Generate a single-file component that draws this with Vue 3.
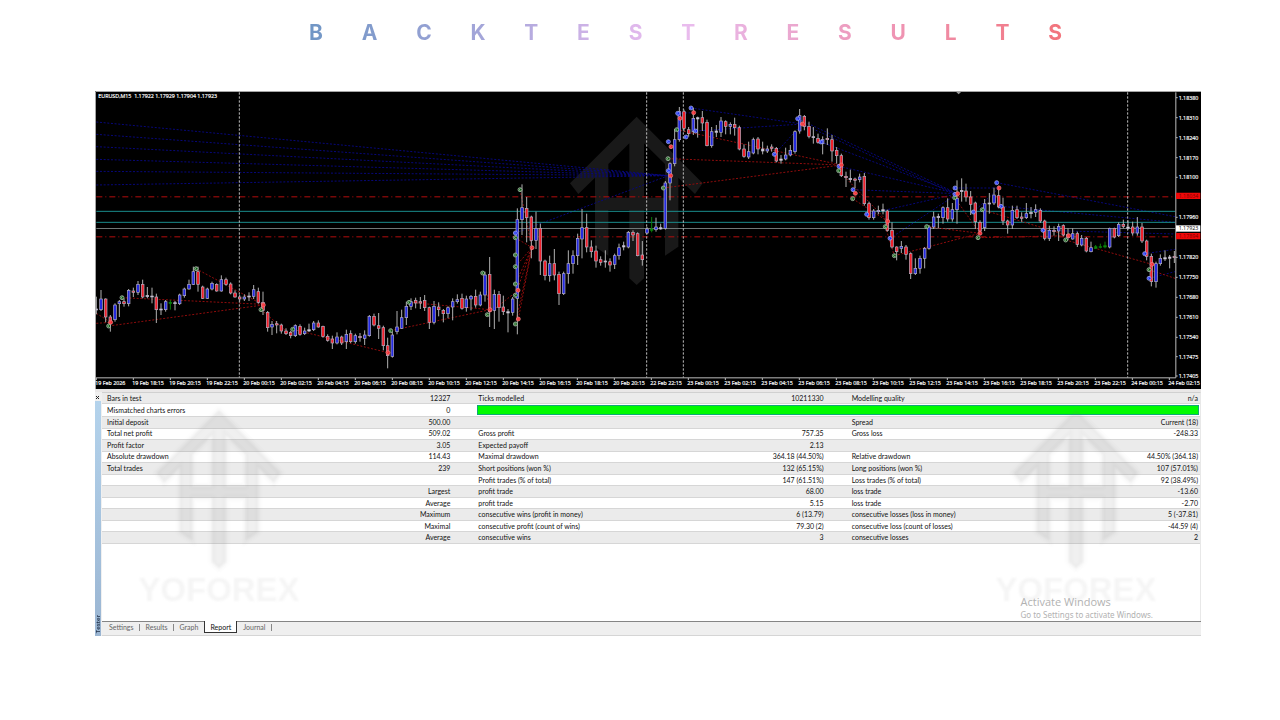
<script setup>
const title = [...'BACKTESTRESULTS']

// Candles in time order: [high, body top, body bottom, low, kind]
const raw = `635 672 675 688 w|615 642 674 678 b|640 642 696 712 r|690 696 716 740 r|655 660 704 710 b|645 650 656 696 b|640 650 656 665 r|612 616 656 664 b|608 618 622 636 r|588 598 622 630 b
584 598 636 640 r|606 631 635 640 w|608 633 636 655 w|626 636 674 714 r|655 672 675 690 w|645 650 674 680 b|645 652 655 674 g|648 653 656 676 w|626 630 656 660 b|608 612 632 638 b
584 598 612 614 b|545 560 598 600 b|545 560 598 620 r|602 606 640 642 r|608 612 640 642 b|590 595 612 616 b|595 598 618 620 r|571 584 618 620 b|578 584 598 602 r|592 597 624 628 r
616 624 636 638 r|630 636 642 650 r|628 636 642 648 b|622 633 636 648 w|600 614 634 642 b|608 620 652 656 r|620 652 676 690 r|678 682 728 740 r|708 718 726 750 b|708 716 720 745 r
716 720 738 746 r|730 738 746 750 r|738 742 752 760 r|718 722 752 756 b|718 724 748 752 r|728 738 746 750 b|716 734 738 741 w|708 714 734 738 b|706 714 726 728 r|722 724 754 758 r
748 754 766 770 r|752 762 774 792 r|742 756 774 778 b|752 756 774 780 r|734 748 770 792 b|736 746 770 774 r|746 752 770 776 b|744 754 758 770 r|736 750 760 780 b|690 694 752 755 b
686 694 720 724 r|684 722 730 762 r|722 728 782 796 r|758 782 812 850 r|740 750 814 818 b|678 726 740 748 b|674 698 730 732 b|650 664 698 720 b|640 650 664 675 b|638 646 654 670 r
636 650 654 672 r|630 646 668 678 r|665 668 712 732 r|648 664 712 718 b|652 666 674 694 r|672 676 686 712 r|664 668 686 700 b|640 650 666 706 b|628 644 650 656 b|626 640 670 674 r
632 642 668 680 b|630 634 642 676 b|614 634 660 668 r|620 630 660 664 b|560 570 630 650 b|516 568 680 726 r|614 628 676 732 b|618 628 668 710 r|632 666 680 690 r|672 680 684 742 w
636 642 682 692 b|370 404 640 748 b|298 368 404 450 b|336 370 398 472 r|392 396 466 520 r|380 430 466 492 b|416 430 528 570 r|524 528 572 586 r|512 536 572 590 b|492 536 570 586 r
560 568 626 660 r|560 566 626 630 b|496 536 566 596 b|496 512 536 566 b|446 460 512 540 b|372 428 462 520 b|386 428 486 502 r|466 486 500 518 r|482 498 528 548 r|514 524 532 542 r
496 528 531 548 w|520 530 540 560 r|506 512 538 552 b|476 488 512 524 b|470 482 486 496 w|438 442 486 490 b|436 442 450 468 r|442 446 512 514 r|468 510 524 542 r|426 432 444 448 b
396 432 436 442 g|398 426 434 440 b|416 428 432 434 w|288 294 430 434 b|232 236 294 346 b|132 164 236 244 b|66 80 164 170 b|74 80 130 140 r|126 134 146 155 r|68 100 140 150 b
95 98 102 158 w|78 98 114 138 r|104 112 182 184 r|126 140 182 188 b|120 138 142 156 w|96 108 142 156 b|106 110 124 148 r|112 118 124 148 b|98 118 128 152 r|122 128 192 196 r
178 192 214 218 r|170 200 216 222 b|158 164 204 208 b|156 162 192 208 r|170 192 198 208 w|182 192 198 204 b|178 186 190 200 r|186 190 228 232 r|210 222 226 236 w|188 210 222 226 b
180 196 210 214 b|136 140 200 206 b|72 92 138 146 b|90 94 124 136 r|110 124 154 160 r|126 155 158 176 w|146 160 172 176 r|154 164 176 208 b|130 160 164 180 r|150 164 198 230 r
186 196 212 236 r|206 212 272 276 r|260 274 278 306 r|254 280 284 292 w|278 282 286 310 r|266 276 284 292 b|264 274 356 362 r|350 356 398 404 r|372 378 398 404 b|362 376 380 388 b
356 374 378 388 w|374 378 436 440 r|412 436 486 490 r|484 486 500 526 r|468 484 490 504 b|480 486 508 524 r|502 506 566 582 r|520 550 566 570 b|512 520 550 566 b|486 490 520 550 b
420 426 490 494 b|380 396 426 432 b|386 394 398 430 w|364 368 398 416 b|340 368 402 410 r|354 374 402 410 b|286 340 374 416 b|280 316 320 350 w|296 318 336 350 r|318 336 358 390 r
350 354 410 432 r|406 412 438 444 r|342 356 428 438 b|324 354 357 386 w|308 330 354 360 b|302 332 366 370 r|338 366 408 420 r|404 408 420 446 r|362 376 420 432 b|362 374 398 402 r
382 396 400 410 r|354 386 398 402 b|366 382 386 400 w|358 374 382 396 b|370 376 408 414 r|404 408 460 466 r|422 436 460 468 b|424 436 440 452 r|416 424 438 468 b|418 422 450 454 r
430 448 458 466 r|430 446 462 464 b|440 446 478 486 r|450 460 480 484 b|456 460 498 502 r|470 488 500 502 b|480 485 490 492 g|476 485 487 490 g|470 482 486 490 g|428 430 486 490 b
428 430 456 460 r|412 418 452 456 b|404 418 424 430 r|406 426 430 434 w|410 426 444 452 r|396 426 444 452 b|414 426 468 474 r|464 468 514 526 r|506 514 590 604 r|530 536 590 608 b
508 520 536 542 b|496 518 522 528 w|510 516 520 550 w|498 514 518 534 r`
const candles = raw.split(/[|\n]/).map((row, i) => {
  const [high, top, bottom, low, kind] = row.split(' ')
  return { x: Math.round(19 + 13.88 * i), high: +high, top: +top, size: bottom - top, low: +low, kind }
})

const markers = {
  green: [[56, 723], [96, 638], [318, 551], [513, 674], [608, 733], [902, 737], [957, 652], [1178, 564], [1192, 689], [1290, 314], [1276, 458], [1276, 510], [1276, 545], [1276, 597], [1276, 631], [1276, 717], [1720, 309], [1734, 221], [1760, 134], [2246, 257], [2288, 341], [2386, 425], [2413, 512], [2510, 425], [2594, 338], [2677, 374], [2664, 458], [2927, 465], [3177, 554]],
  blue: [[1276, 444], [1735, 257], [1735, 170], [1763, 85], [1803, 69], [1817, 138], [1788, 156], [2053, 208], [2123, 101], [2193, 171], [2247, 244], [2289, 314], [2330, 388], [2400, 460], [2595, 309], [2595, 328], [2650, 381], [2720, 293], [2733, 364], [2859, 436], [3164, 506], [3177, 580]],
  red: [[62, 712], [520, 660], [894, 803], [1200, 674], [1326, 488], [1284, 616], [1285, 702], [1742, 272], [1743, 185], [1770, 100], [1811, 83], [2137, 117], [2254, 240], [2296, 325], [2393, 409], [2603, 326], [2670, 445], [2727, 309], [2936, 452], [3186, 538]],
}

const blueTrades = [
  [19, 111, 1735, 272], [19, 148, 1735, 272], [19, 185, 1735, 272], [19, 223, 1735, 272], [19, 259, 1735, 272], [19, 300, 1735, 272],
  [1276, 444, 1735, 272], [1803, 69, 2137, 117], [1763, 85, 1811, 83], [1817, 138, 2137, 117], [2053, 208, 2137, 117],
  [2123, 101, 2603, 326], [2137, 117, 2595, 328], [2193, 171, 2603, 326], [2247, 244, 2603, 326], [2289, 314, 2603, 326], [2330, 388, 2603, 326], [2400, 460, 2603, 326],
  [2595, 309, 2727, 309], [2720, 293, 3255, 395], [2733, 364, 3255, 412], [2650, 381, 2727, 309], [2859, 436, 3255, 447], [3164, 506, 3255, 493], [3177, 580, 3255, 560],
]
const redTrades = [
  [19, 685, 62, 712], [19, 715, 62, 712], [56, 723, 520, 660], [96, 638, 520, 658], [318, 551, 520, 660], [513, 674, 600, 748], [608, 733, 894, 803],
  [902, 737, 1200, 674], [957, 652, 1200, 674], [1178, 564, 1200, 674], [1192, 689, 1284, 616], [1290, 314, 1326, 488],
  [1276, 458, 1326, 488], [1276, 545, 1326, 488], [1276, 597, 1326, 488], [1276, 631, 1326, 488], [1276, 717, 1326, 488], [1285, 702, 1326, 488],
  [1720, 309, 2254, 240], [1734, 221, 2254, 240], [1760, 134, 2254, 240], [2246, 257, 2393, 409], [2288, 341, 2393, 409], [2386, 425, 2413, 512],
  [2413, 512, 2670, 445], [2510, 425, 2670, 445], [2594, 338, 2670, 445], [2664, 458, 2936, 452], [2677, 374, 2936, 452], [2927, 465, 3186, 538], [3177, 554, 3255, 580],
]

const sessionBreaks = [448, 1670, 1780, 3113]

const two = (n) => String(n).padStart(2, '0')
const times = ['19 Feb 2026', '19 Feb 18:15', '19 Feb 20:15', '19 Feb 22:15']
for (let h = 0; h <= 20; h += 2) times.push(`20 Feb ${two(h)}:15`)
times.push('22 Feb 22:15')
for (let h = 0; h <= 22; h += 2) times.push(`23 Feb ${two(h)}:15`)
times.push('24 Feb 00:15', '24 Feb 02:15')

const prices = [
  ['1.18380', 38], ['1.18310', 98], ['1.18240', 158], ['1.18170', 218], ['1.18100', 277], ['1.17960', 397],
  ['1.17820', 517], ['1.17750', 577], ['1.17680', 637], ['1.17610', 697], ['1.17540', 757], ['1.17475', 815], ['1.17405', 873],
]

const rows = [
  ['Bars in test', '12327', 'Ticks modelled', '10211330', 'Modelling quality', 'n/a'],
  ['Mismatched charts errors', '0'],
  ['Initial deposit', '500.00', '', '', 'Spread', 'Current (18)'],
  ['Total net profit', '509.02', 'Gross profit', '757.35', 'Gross loss', '-248.33'],
  ['Profit factor', '3.05', 'Expected payoff', '2.13', '', ''],
  ['Absolute drawdown', '114.43', 'Maximal drawdown', '364.18 (44.50%)', 'Relative drawdown', '44.50% (364.18)'],
  ['Total trades', '239', 'Short positions (won %)', '132 (65.15%)', 'Long positions (won %)', '107 (57.01%)'],
  ['', '', 'Profit trades (% of total)', '147 (61.51%)', 'Loss trades (% of total)', '92 (38.49%)'],
  ['', 'Largest', 'profit trade', '68.00', 'loss trade', '-13.60'],
  ['', 'Average', 'profit trade', '5.15', 'loss trade', '-2.70'],
  ['', 'Maximum', 'consecutive wins (profit in money)', '6 (13.79)', 'consecutive losses (loss in money)', '5 (-37.81)'],
  ['', 'Maximal', 'consecutive profit (count of wins)', '79.30 (2)', 'consecutive loss (count of losses)', '-44.59 (4)'],
  ['', 'Average', 'consecutive wins', '3', 'consecutive losses', '2'],
]

const tabs = ['Settings', 'Results', 'Graph', 'Report', 'Journal']
const activeTab = 'Report'
const logoPath = 'M1640 95L1838 295L1815 327L1765 278V485L1725 512V375H1662V580L1640 600L1618 580V375H1555V512L1515 485V278L1465 327L1440 295ZM1618 175L1555 237V338H1618ZM1662 175V338H1725V237Z'
</script>

<template>
  <main class="page">
    <h1 class="title" aria-label="Backtest results">
      <span v-for="(letter, i) in title" :key="i">{{ letter }}</span>
    </h1>

    <section class="terminal">
      <svg class="chart" viewBox="15 18 3318 894" role="img" aria-label="EURUSD M15 candlestick chart">
        <rect x="15" y="18" width="3318" height="894" fill="#000" />
        <path :d="logoPath" fill="#191919" fill-rule="evenodd" />

        <g class="trade-blue">
          <line v-for="(l, i) in blueTrades" :key="i" :x1="l[0]" :y1="l[1]" :x2="l[2]" :y2="l[3]" />
        </g>
        <g stroke-width="3">
          <path d="M19 379H3256M19 412H3256" stroke="#1a8c8c" />
          <path d="M19 430.500H3256" stroke="#707878" />
          <path d="M19 335.500H3256M19 455.500H3256" stroke="#b30d0d" stroke-dasharray="18 9 3 9" />
        </g>
        <g class="trade-red">
          <line v-for="(l, i) in redTrades" :key="i" :x1="l[0]" :y1="l[1]" :x2="l[2]" :y2="l[3]" />
        </g>
        <line v-for="x in sessionBreaks" :key="x" :x1="x" :x2="x" y1="22" y2="878" stroke="#bdbdbd" stroke-width="3" stroke-dasharray="7 5" />

        <g v-for="c in candles" :key="c.x" :class="['candle', c.kind]">
          <line :x1="c.x" :x2="c.x" :y1="c.high" :y2="c.low" />
          <rect :x="c.x - 4" :y="c.top" width="8" :height="c.size" />
        </g>

        <template v-for="(points, kind) in markers" :key="kind">
          <g v-for="(p, i) in points" :key="i" :class="['marker', kind]">
            <circle :cx="p[0]" :cy="p[1]" r="6" />
            <path :d="`M${p[0] + 2} ${p[1] - 4}L${p[0] - 3} ${p[1]}L${p[0] + 2} ${p[1] + 4}`" />
          </g>
        </template>

        <rect x="3257" y="22" width="76" height="890" fill="#000" />
        <path d="M2598 20H2614L2606 28Z" fill="#999" />
        <path d="M16.500 912V19.500H3333" fill="none" stroke="#a5a5a5" stroke-width="3" />
        <path d="M18 878.500H3257.500V22" fill="none" stroke="#bbb" stroke-width="3" />
        <g stroke="#bbb" stroke-width="3">
          <line v-for="(t, i) in times" :key="t" :x1="19 + 111 * i" :x2="19 + 111 * i" y1="879" y2="885" />
          <line v-for="p in prices" :key="p[1]" x1="3258" x2="3263" :y1="p[1]" :y2="p[1]" />
        </g>
        <g class="axis-text">
          <text x="25" y="39">EURUSD,M15&#160; 1.17922 1.17929 1.17904 1.17923</text>
          <text v-for="(t, i) in times" :key="t" :x="16 + 111 * i" y="899">{{ t }}</text>
          <text v-for="p in prices" :key="p[1]" x="3266" :y="p[1] + 6">{{ p[0] }}</text>
        </g>
        <g class="axis-text plain">
          <path d="M3258 323H3331V342H3258ZM3258 444H3331V463H3258Z" fill="#f00808" />
          <rect x="3258" y="421" width="73" height="19" fill="#fff" />
          <text x="3266" y="339" class="on-red">1.18034</text>
          <text x="3266" y="459" class="on-red">1.17894</text>
          <text x="3266" y="436" class="on-white">1.17923</text>
        </g>
      </svg>

      <div class="splitter"></div>

      <section class="tester" aria-label="Strategy tester">
        <aside class="rail">
          <button class="close" type="button" aria-label="Close">
            <svg viewBox="0 0 5 5"><path d="M1 1L4 4M4 1L1 4" stroke="#222" stroke-width="1" /></svg>
          </button>
          <div class="rail-bar"><span>Tester</span></div>
        </aside>

        <div class="panel">
          <div class="report">
            <table>
              <colgroup>
                <col class="c1" /><col class="c2" /><col class="c3" /><col class="c4" /><col class="c5" /><col class="c6" />
              </colgroup>
              <tbody>
                <tr v-for="(row, i) in rows" :key="i">
                  <td v-for="(cell, j) in row" :key="j">{{ cell }}</td>
                  <td v-if="row.length === 2" colspan="4" class="quality"><div></div></td>
                </tr>
              </tbody>
            </table>

            <svg v-for="side in ['left', 'right']" :key="side" :class="['watermark', side]" viewBox="1375 85 530 640" aria-hidden="true">
              <path :d="logoPath" fill="#777" fill-opacity="0.11" fill-rule="evenodd" stroke="#777" stroke-opacity="0.04" stroke-width="18" />
              <text x="1640" y="705" text-anchor="middle">YOFOREX</text>
            </svg>

            <div class="activate">
              <p class="activate-title">Activate Windows</p>
              <p class="activate-hint">Go to Settings to activate Windows.</p>
            </div>
          </div>

          <nav class="tabs" aria-label="Tester tabs">
            <button v-for="tab in tabs" :key="tab" type="button" :class="{ active: tab === activeTab }">{{ tab }}</button>
          </nav>
        </div>
      </section>
    </section>
  </main>
</template>

<style scoped>
.page {
  box-sizing: border-box;
  min-height: 100vh;
  padding: 20px 79px 84px 95px;
  background: #fff;
  font-family: "Open Sans", "Noto Sans", sans-serif;
}
.title {
  display: flex;
  justify-content: space-between;
  margin: 0 139px 45px 214px;
  font: 700 21px/26px Inter, "Liberation Sans", sans-serif;
  color: transparent;
  background: linear-gradient(90deg, #7096c5, #a6a6da 24%, #dfb8ec 43%, #e9bcee 50%, #eaabd4 62%, #ef94b3 78%, #f2747c);
  -webkit-background-clip: text;
  background-clip: text;
}
.chart {
  display: block;
  width: 100%;
}
.trade-blue line,
.trade-red line {
  stroke-width: 3;
  stroke-dasharray: 6 5;
}
.trade-blue line { stroke: #07077a; }
.trade-red line { stroke: #8f0c0c; }
.candle line {
  stroke: #b0b0b0;
  stroke-width: 3;
}
.candle rect {
  stroke: #b4aec4;
  stroke-width: 2;
}
.candle.b rect { fill: #242ae0; }
.candle.r rect { fill: #f0202a; }
.candle.w rect { fill: #ddd; }
.candle.g rect,
.candle.g line {
  fill: #0a8a0a;
  stroke: #0a7d0a;
}
.marker circle {
  stroke: #c4d0c4;
  stroke-width: 2;
}
.marker path {
  fill: none;
  stroke-width: 2;
}
.marker.green circle { fill: #0c5a12; }
.marker.green path { stroke: #b4d4b4; }
.marker.blue circle { fill: #1c2cf0; stroke: #b8c0f0; }
.marker.blue path { stroke: #8ca0ff; }
.marker.red circle { fill: #f02830; stroke: #f08c8c; }
.marker.red path { stroke: #ff7070; }
.axis-text {
  font-family: "Open Sans", "Noto Sans", sans-serif;
  font-size: 16px;
  fill: #fff;
  stroke: #fff;
  stroke-width: 0.5px;
}
.axis-text.plain { stroke: none; }
.axis-text .on-red { fill: #7a0000; }
.axis-text .on-white { fill: #000; }
.splitter {
  height: 3px;
  background: #e9e7e7;
}
.tester {
  display: flex;
  height: 244px;
}
.rail {
  display: flex;
  flex-direction: column;
  flex: 0 0 7px;
  background: #f0f0f0;
}
.close {
  display: block;
  width: 5px;
  height: 9px;
  padding: 1px 0 0;
  border: 0;
  background: none;
}
.close svg {
  display: block;
  width: 5px;
  height: 5px;
}
.rail-bar {
  display: flex;
  flex: 1;
  align-items: flex-end;
  width: 6px;
  background: linear-gradient(#b4d3ec, #9ab5d2);
}
.rail-bar span {
  writing-mode: vertical-rl;
  transform: rotate(180deg);
  padding-top: 3px;
  font-size: 6px;
  font-weight: 600;
  line-height: 6px;
  color: #1c2c44;
}
.panel {
  display: flex;
  flex: 1;
  flex-direction: column;
  min-width: 0;
  border-bottom: 1px solid #d5d5d5;
}
.report {
  position: relative;
  flex: 1;
  border-top: 1px solid #d0d0d0;
  border-right: 1px solid #e8e8e8;
}
table {
  width: 100%;
  height: 151px;
  border-collapse: collapse;
  table-layout: fixed;
  font-family: Lato, "Open Sans", sans-serif;
  font-size: 7px;
  line-height: 9px;
  color: #111;
}
.c1 { width: 16%; }
.c2 { width: 16%; }
.c3 { width: 20%; }
.c4 { width: 14%; }
.c5 { width: 20%; }
.c6 { width: 14%; }
tr { border-bottom: 1px solid #d6d6d6; }
tr:nth-child(odd) { background: #ebebeb; }
td {
  padding: 0 2px 0 3px;
  white-space: nowrap;
}
td:nth-child(odd) { padding-left: 25px; }
td:first-child { padding-left: 5px; }
td:nth-child(even) { text-align: right; }
td:nth-child(2),
td:nth-child(4) { padding-right: 3px; }
td.quality { padding: 0 1px 0 24px; }
.quality div {
  box-sizing: border-box;
  height: 10px;
  border: 1px solid #10a878;
  background: #00fb00;
}
.watermark {
  position: absolute;
  top: 14px;
  width: 166px;
  filter: blur(1px);
}
.watermark.left { left: 34px; }
.watermark.right { right: 41px; }
.watermark text {
  font: 700 105px "Liberation Sans", sans-serif;
  fill: #777;
  fill-opacity: 0.07;
}
.activate {
  position: absolute;
  right: 47px;
  bottom: 1px;
  color: #b2b2b2;
}
.activate p { margin: 0; }
.activate-title {
  font-size: 11px;
  line-height: 15px;
}
.activate-hint {
  font: 8px/11px "Noto Sans", "Open Sans", sans-serif;
}
.tabs {
  display: flex;
  height: 13px;
  padding-left: 1px;
  border-top: 1px solid #858585;
  background: #efefef;
}
.tabs button {
  position: relative;
  height: 11px;
  padding: 0 6px;
  border: 0;
  background: none;
  font: 7px/11px Lato, "Open Sans", sans-serif;
  color: #666;
}
.tabs button:not(.active):not(:nth-child(3))::after {
  content: "";
  position: absolute;
  top: 2px;
  right: 0;
  height: 7px;
  border-right: 1px solid #888;
}
.tabs button.active {
  height: 12px;
  margin-top: -1px;
  padding: 1px 5px 0;
  border: 1px solid #333;
  border-top: 0;
  background: #fff;
  color: #111;
}
</style>

<style>
body {
  margin: 0;
  background: #fff;
}
</style>
